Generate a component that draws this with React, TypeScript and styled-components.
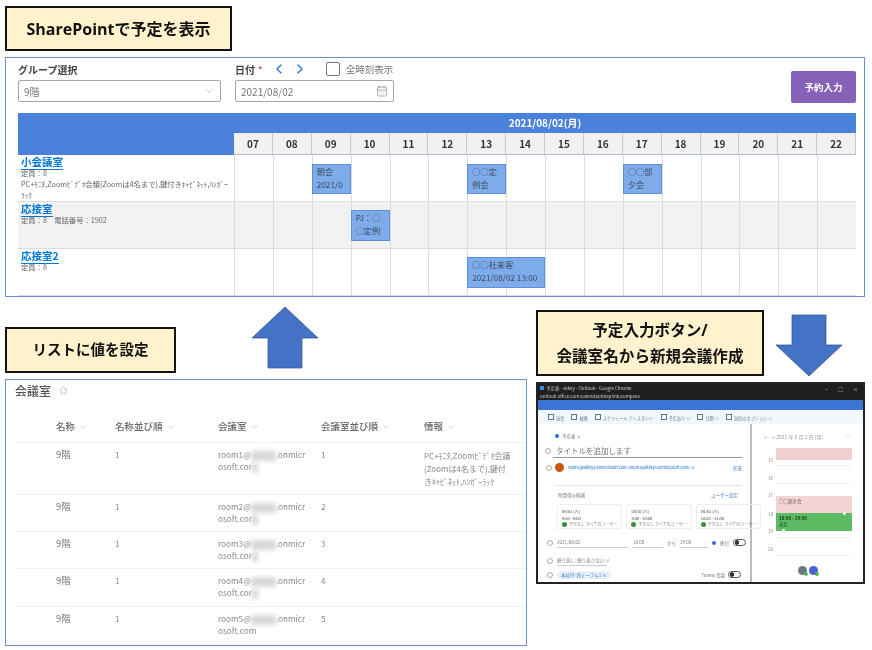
import styled, { createGlobalStyle } from 'styled-components'
import { CalendarDays, ChevronDown, ChevronLeft, ChevronRight, Star } from 'lucide-react'

const GlobalStyle = createGlobalStyle`
    html, body {
        margin: 0;
        padding: 0;
        background: #fff;
    }
    body {
        font-family: "Noto Sans CJK JP", "Noto Sans", sans-serif;
        color: #444;
    }
`

const FONT = `"Noto Sans CJK JP", "Noto Sans", sans-serif`
const LINE = '#dcdcdc'

const Page = styled.div`
    width: 872px;
    height: 650px;
    padding: 6px 0 0 5px;
    box-sizing: border-box;
    overflow: hidden;
    background: #fff;
`

const Callout = styled.div<{ $w: number; $h: number; $size: number }>`
    width: ${p => p.$w}px;
    height: ${p => p.$h}px;
    box-sizing: border-box;
    display: flex;
    flex-direction: column;
    align-items: center;
    justify-content: center;
    flex-shrink: 0;
    background: #fff2cc;
    border: 2px solid #111;
    color: #111;
    font-family: "Open Sans", ${FONT};
    font-size: ${p => p.$size}px;
    font-weight: 700;
    line-height: 26px;
    filter: blur(0.4px);
`

const LeftCallout = styled(Callout)`
    margin-bottom: 6px;
`

const SchedulePanel = styled.section`
    width: 860px;
    height: 240px;
    margin-top: 6px;
    box-sizing: border-box;
    padding: 2px 8px 0 12px;
    border: 1px solid #6d8fd6;
    overflow: hidden;
    filter: blur(0.45px);
`

const FilterBar = styled.div`
    display: flex;
    height: 53px;
`

const Field = styled.div<{ $w: number; $mr: number }>`
    width: ${p => p.$w}px;
    margin-right: ${p => p.$mr}px;
    flex-shrink: 0;
`

const FieldHead = styled.div`
    display: flex;
    align-items: center;
    height: 18px;
    font-size: 10px;
    font-weight: 700;
    color: #444;
    white-space: nowrap;
`

const Required = styled.span`
    color: #c4314b;
    margin-left: 3px;
    font-weight: 400;
`

const NavIcons = styled.span`
    display: flex;
    align-items: center;
    gap: 5px;
    margin-left: 8px;
    color: #2f7bdc;
`

const CheckBox = styled.span`
    width: 12px;
    height: 12px;
    margin-left: 18px;
    border: 1px solid #777;
    border-radius: 2px;
    flex-shrink: 0;
`

const CheckLabel = styled.span`
    margin-left: 6px;
    font-size: 9.5px;
    font-weight: 400;
    color: #777;
`

const InputBox = styled.div`
    height: 22px;
    margin-top: 2px;
    box-sizing: border-box;
    padding: 0 5px;
    display: flex;
    align-items: center;
    justify-content: space-between;
    border: 1px solid #a6a6a6;
    border-radius: 2px;
    font-size: 10px;
    color: #777;
`

const ReserveButton = styled.button`
    width: 65px;
    height: 32px;
    margin: 11px 0 0 auto;
    padding: 0;
    border: none;
    border-radius: 2px;
    background: #8661b8;
    color: #fff;
    font-family: ${FONT};
    font-size: 9.5px;
    font-weight: 700;
`

const Table = styled.div`
    width: 838px;
`

const TimeGrid = styled.div`
    display: grid;
    grid-template-columns: 216px repeat(16, 1fr);
`

const HeaderCorner = styled.div`
    grid-row: span 2;
    background: #4a82db;
`

const DateHead = styled.div`
    grid-column: span 16;
    height: 20px;
    line-height: 20px;
    text-align: center;
    background: #4a82db;
    color: #fff;
    font-size: 10px;
    font-weight: 700;
`

const HourHead = styled.div`
    height: 22px;
    line-height: 21px;
    box-sizing: border-box;
    text-align: center;
    background: #f1f1f1;
    border-right: 1px solid #c8c8c8;
    border-bottom: 1px solid #a9b9d6;
    color: #333;
    font-size: 10px;
    font-weight: 700;
`

const RoomRow = styled(TimeGrid)<{ $shaded?: boolean }>`
    height: 47px;
    box-sizing: border-box;
    border-bottom: 1px solid ${LINE};
    background: ${p => (p.$shaded ? '#f2f2f2' : '#fff')};
`

const RoomInfo = styled.div`
    padding: 1px 0 0 3px;
    overflow: hidden;
`

const RoomLink = styled.a`
    display: block;
    width: fit-content;
    height: 14px;
    box-sizing: border-box;
    line-height: 12px;
    border-bottom: 1px solid #0078d4;
    color: #0078d4;
    font-size: 10.5px;
    font-weight: 700;
`

const RoomNote = styled.div`
    font-size: 7.3px;
    line-height: 11px;
    color: #666;
    white-space: nowrap;
    &:nth-child(2) {
        margin-top: -2px;
    }
`

const Slot = styled.div`
    position: relative;
    border-left: 1px solid ${LINE};
`

const Booking = styled.div<{ $span?: number; $top: number; $h: number }>`
    position: absolute;
    z-index: 1;
    top: ${p => p.$top}px;
    left: -1px;
    width: ${p => (p.$span ?? 1) * 38.9}px;
    height: ${p => p.$h}px;
    box-sizing: border-box;
    padding: 0 4px;
    overflow: hidden;
    background: #7eabea;
    border: 1px solid #5f8fd8;
    color: #3c4a5e;
    font-size: 8.2px;
    line-height: 13px;
    white-space: nowrap;
`

const BottomRow = styled.div`
    display: flex;
`

const LeftColumn = styled.div`
    width: 522px;
    flex-shrink: 0;
`

const RightColumn = styled.div`
    margin: 13px 0 0 9px;
`

const LeftHead = styled.div`
    height: 82px;
    display: flex;
    align-items: flex-end;
`

const UpArrow = styled.svg`
    margin: 0 0 10px 75px;
`

const DownArrow = styled.svg`
    margin: 4px 0 0 11px;
`

const RightHead = styled.div`
    display: flex;
    height: 66px;
`

const ListPanel = styled.section`
    height: 267px;
    box-sizing: border-box;
    padding: 0 0 0 9px;
    border: 1px solid #6d8fd6;
    overflow: hidden;
    filter: blur(0.45px);
`

const ListTitle = styled.div`
    display: flex;
    align-items: center;
    gap: 8px;
    height: 20px;
    font-size: 12px;
    font-weight: 500;
    color: #555;
`

const ListRow = styled.div<{ $h: number; $head?: boolean }>`
    display: grid;
    grid-template-columns: 41px 59px 103px 103px 103px 1fr;
    height: ${p => p.$h}px;
    box-sizing: border-box;
    padding-top: ${p => (p.$head ? 20 : 6)}px;
    border-bottom: 1px solid #f0f0f0;
    font-size: 8.2px;
    line-height: 11.5px;
    color: #888;
`

const ListHeadCell = styled.div`
    display: flex;
    align-items: center;
    gap: 3px;
    height: 14px;
    font-size: 9.5px;
    font-weight: 500;
    color: #666;
    white-space: nowrap;
    svg {
        color: #999;
    }
`

const BodyCell = styled.div`
    min-width: 0;
    white-space: nowrap;
`

const FloorCell = styled.div`
    font-size: 9.5px;
    color: #777;
`

const InfoCell = styled.div`
    font-size: 8px;
    line-height: 13px;
    color: #888;
    white-space: nowrap;
`

const Smudge = styled.span<{ $w: number }>`
    display: inline-block;
    width: ${p => p.$w}px;
    height: 10px;
    vertical-align: middle;
    background: #d8d8d8;
    filter: blur(2px);
`

const OutlookWindow = styled.div`
    width: 329px;
    height: 202px;
    margin-top: 6px;
    box-sizing: border-box;
    border: 2px solid #222;
    overflow: hidden;
    filter: blur(0.7px);
    font-size: 5px;
    color: #777;
`

const ChromeBar = styled.div`
    height: 8px;
    padding: 0 5px 0 2px;
    display: flex;
    align-items: center;
    gap: 2px;
    background: #1f1f20;
    color: #c9c9c9;
    font-size: 4.5px;
    white-space: nowrap;
`

const WindowIcon = styled.span`
    width: 4px;
    height: 4px;
    background: #3a8ee6;
`

const WindowControls = styled.span`
    margin-left: auto;
    display: flex;
    gap: 10px;
    font-size: 5px;
`

const BrandBar = styled.div`
    height: 10px;
    background: #3a75d4;
`

const OutlookToolbar = styled.div`
    height: 14px;
    padding-left: 10px;
    display: flex;
    align-items: center;
    gap: 7px;
    background: #f2f7fc;
    color: #6a7f99;
    font-size: 4.2px;
    white-space: nowrap;
`

const ToolIcon = styled.span`
    display: inline-block;
    width: 4px;
    height: 4px;
    margin-right: 2px;
    border: 1px solid #5b7897;
`

const ComposeBody = styled.div`
    display: flex;
    height: 164px;
    background: #fff;
`

const ComposePane = styled.div`
    width: 214px;
    box-sizing: border-box;
    padding: 7px 9px 0 17px;
    border-right: 2px solid #bdbdbd;
    flex-shrink: 0;
`

const CalendarName = styled.div`
    display: flex;
    align-items: center;
    gap: 3px;
    height: 10px;
    font-size: 4.5px;
`

const BlueDot = styled.span`
    width: 4px;
    height: 4px;
    border-radius: 50%;
    background: #2f6fd8;
    flex-shrink: 0;
`

const GutterIcon = styled.span`
    width: 4px;
    height: 4px;
    margin-left: -11px;
    border: 1px solid #aaa;
    border-radius: 50%;
    flex-shrink: 0;
`

const TitleInput = styled.div`
    display: flex;
    align-items: center;
    gap: 5px;
    height: 13px;
    margin: 3px -1px 0 -2px;
    padding-left: 3px;
    border-bottom: 1px solid #9a9a9a;
    font-size: 7.5px;
    color: #777;
`

const Attendees = styled.div`
    display: flex;
    align-items: center;
    gap: 4px;
    height: 28px;
    box-sizing: border-box;
    padding: 0 0 8px 2px;
    margin-right: -1px;
    border-bottom: 1px solid #e4e4e4;
`

const Avatar = styled.span`
    width: 9px;
    height: 9px;
    border-radius: 50%;
    background: #c9570f;
    margin-left: -1px;
    flex-shrink: 0;
`

const AttendeeText = styled.span`
    color: #3b78c4;
    font-size: 3.8px;
    background: #eef5fc;
    white-space: nowrap;
`

const OptionalLink = styled.span`
    margin-left: auto;
    color: #3b78c4;
    font-size: 4.5px;
`

const SectionHead = styled.div`
    display: flex;
    justify-content: space-between;
    margin: 6px 0 5px;
    padding: 0 3px;
    font-size: 4.5px;
    line-height: 7px;
`

const SectionLink = styled.span`
    color: #3b78c4;
`

const CandidateRow = styled.div`
    display: grid;
    grid-template-columns: repeat(3, 1fr);
    gap: 4px;
    margin: 0 2px;
`

const CandidateCard = styled.div`
    height: 25px;
    box-sizing: border-box;
    padding: 3px 4px;
    border: 1px solid #eee;
    border-radius: 2px;
    font-size: 4px;
    line-height: 6.5px;
    color: #444;
    white-space: nowrap;
`

const CandidateStatus = styled.div`
    display: flex;
    align-items: center;
    gap: 2px;
    color: #888;
`

const GreenCheck = styled.span`
    width: 5px;
    height: 5px;
    border-radius: 50%;
    background: #3d8f3d;
`

const FormRow = styled.div<{ $mt: number }>`
    display: flex;
    align-items: center;
    gap: 4px;
    height: 11px;
    margin-top: ${p => p.$mt}px;
    padding-left: 3px;
    font-size: 4.5px;
    white-space: nowrap;
`

const Underlined = styled.span<{ $w: number }>`
    width: ${p => p.$w}px;
    height: 9px;
    line-height: 8px;
    border-bottom: 1px solid #ccc;
    flex-shrink: 0;
`

const Toggle = styled.span`
    width: 11px;
    height: 5px;
    border: 1px solid #555;
    border-radius: 4px;
    flex-shrink: 0;
    background: radial-gradient(circle at 3px 50%, #333 2px, transparent 2.5px);
`

const LocationChip = styled.span`
    padding: 1px 4px;
    border-radius: 5px;
    background: #e8f2fb;
    color: #3b78c4;
`

const TeamsSetting = styled.span`
    margin-left: auto;
    display: flex;
    align-items: center;
    gap: 3px;
`

const CalendarPane = styled.div`
    flex: 1;
    padding: 7px 11px 0 12px;
`

const CalendarNav = styled.div`
    display: flex;
    align-items: center;
    gap: 5px;
    height: 10px;
    font-size: 5px;
    color: #999;
    svg:last-child {
        margin-left: auto;
    }
`

const DayGrid = styled.div`
    position: relative;
    height: 111px;
    margin: 7px 0 0 12px;
    background: repeating-linear-gradient(to bottom, #fff 0 17px, #f1f1f1 17px 18px);
`

const HourLabel = styled.span<{ $y: number }>`
    position: absolute;
    left: -8px;
    top: ${p => p.$y}px;
    font-size: 4.5px;
    line-height: 7px;
    color: #888;
`

const CalendarEvent = styled.div<{ $y: number; $h: number; $bg: string }>`
    position: absolute;
    left: 0;
    right: 0;
    top: ${p => p.$y}px;
    height: ${p => p.$h}px;
    box-sizing: border-box;
    padding: 2px 3px;
    background: ${p => p.$bg};
    font-size: 4.5px;
    line-height: 6px;
    color: #555;
`

const BusyEvent = styled(CalendarEvent)`
    color: #14401a;
    &::before,
    &::after {
        content: '';
        position: absolute;
        width: 3px;
        height: 3px;
        border-radius: 50%;
        background: #fff;
    }
    &::before {
        top: -1px;
        right: 6px;
    }
    &::after {
        bottom: -1px;
        left: 6px;
    }
`

const Presence = styled.div`
    display: flex;
    justify-content: center;
    gap: 2px;
    margin-top: 7px;
`

const PresenceBubble = styled.span<{ $bg: string }>`
    position: relative;
    width: 9px;
    height: 9px;
    border-radius: 50%;
    background: ${p => p.$bg};
    &::after {
        content: '';
        position: absolute;
        right: -1px;
        bottom: -1px;
        width: 4px;
        height: 4px;
        border-radius: 50%;
        background: #55b855;
    }
`

const HOURS = ['07', '08', '09', '10', '11', '12', '13', '14', '15', '16', '17', '18', '19', '20', '21', '22']

interface BookingData {
    hour: string
    lines: string[]
    span?: number
    top: number
    h: number
}

const ROOMS: { name: string; notes: string[]; bookings: BookingData[] }[] = [
    {
        name: '小会議室',
        notes: ['定員：8', 'PC+ﾓﾆﾀ,Zoomﾋﾞﾃﾞｵ会議(Zoomは4名まで),鍵付きｷｬﾋﾞﾈｯﾄ,ﾊﾝｶﾞｰ', 'ﾗｯｸ'],
        bookings: [
            { hour: '09', lines: ['朝会', '2021/0', '8/02'], top: 9, h: 30 },
            { hour: '13', lines: ['○○定', '例会', '2021/0'], top: 9, h: 30 },
            { hour: '17', lines: ['○○部', '夕会', '2021/0'], top: 9, h: 30 },
        ],
    },
    {
        name: '応接室',
        notes: ['定員：8　電話番号：1902'],
        bookings: [{ hour: '10', lines: ['PJ：○', '○定例', '会'], top: 8, h: 31 }],
    },
    {
        name: '応接室2',
        notes: ['定員：8'],
        bookings: [{ hour: '13', lines: ['○○社来客', '2021/08/02 13:00', '- 2021/08/02 14:00'], span: 2, top: 8, h: 31 }],
    },
]

const LIST_ROWS = [
    { id: 1, h: 52 },
    { id: 2, h: 37 },
    { id: 3, h: 37 },
    { id: 4, h: 38 },
    { id: 5, h: 40 },
]

const CANDIDATES = ['8:00 - 9:00', '9:00 - 10:00', '10:00 - 11:00']

function ArrowShape({ points }: { points: string }) {
    return <polygon points={points} fill="#4472c4" stroke="#2f5597" strokeWidth="0.75" />
}

function Schedule() {
    return (
        <SchedulePanel>
            <FilterBar>
                <Field $w={203} $mr={14}>
                    <FieldHead>グループ選択</FieldHead>
                    <InputBox>
                        9階
                        <ChevronDown size={12} strokeWidth={1} color="#888" />
                    </InputBox>
                </Field>
                <Field $w={159} $mr={0}>
                    <FieldHead>
                        日付<Required>*</Required>
                        <NavIcons>
                            <ChevronLeft size={16} strokeWidth={2.2} />
                            <ChevronRight size={16} strokeWidth={2.2} />
                        </NavIcons>
                        <CheckBox />
                        <CheckLabel>全時刻表示</CheckLabel>
                    </FieldHead>
                    <InputBox>
                        2021/08/02
                        <CalendarDays size={12} strokeWidth={1} color="#666" />
                    </InputBox>
                </Field>
                <ReserveButton>予約入力</ReserveButton>
            </FilterBar>
            <Table>
                <TimeGrid>
                    <HeaderCorner />
                    <DateHead>2021/08/02(月)</DateHead>
                    {HOURS.map(hour => (
                        <HourHead key={hour}>{hour}</HourHead>
                    ))}
                </TimeGrid>
                {ROOMS.map((room, index) => (
                    <RoomRow key={room.name} $shaded={index === 1}>
                        <RoomInfo>
                            <RoomLink>{room.name}</RoomLink>
                            {room.notes.map(note => (
                                <RoomNote key={note}>{note}</RoomNote>
                            ))}
                        </RoomInfo>
                        {HOURS.map(hour => {
                            const booking = room.bookings.find(b => b.hour === hour)
                            return (
                                <Slot key={hour}>
                                    {booking && (
                                        <Booking $span={booking.span} $top={booking.top} $h={booking.h}>
                                            {booking.lines.map(line => (
                                                <div key={line}>{line}</div>
                                            ))}
                                        </Booking>
                                    )}
                                </Slot>
                            )
                        })}
                    </RoomRow>
                ))}
            </Table>
        </SchedulePanel>
    )
}

function RoomList() {
    return (
        <ListPanel>
            <ListTitle>
                会議室
                <Star size={9} strokeWidth={1} color="#777" />
            </ListTitle>
            <ListRow $h={43} $head>
                <div />
                {['名称', '名称並び順', '会議室', '会議室並び順', '情報'].map(title => (
                    <ListHeadCell key={title}>
                        {title}
                        <ChevronDown size={10} strokeWidth={1} />
                    </ListHeadCell>
                ))}
            </ListRow>
            {LIST_ROWS.map(row => (
                <ListRow key={row.id} $h={row.h}>
                    <div />
                    <FloorCell>9階</FloorCell>
                    <BodyCell>1</BodyCell>
                    <BodyCell>
                        room{row.id}@<Smudge $w={25} />.onmicr
                        <br />
                        {row.id === 5 ? 'osoft.com' : 'osoft.cor'}
                        {row.id !== 5 && <Smudge $w={6} />}
                    </BodyCell>
                    <BodyCell>{row.id}</BodyCell>
                    {row.id === 1 ? (
                        <InfoCell>
                            PC+ﾓﾆﾀ,Zoomﾋﾞﾃﾞｵ会議
                            <br />
                            (Zoomは4名まで),鍵付
                            <br />
                            きｷｬﾋﾞﾈｯﾄ,ﾊﾝｶﾞｰﾗｯｸ
                        </InfoCell>
                    ) : (
                        <div />
                    )}
                </ListRow>
            ))}
        </ListPanel>
    )
}

function Outlook() {
    return (
        <OutlookWindow>
            <ChromeBar>
                <WindowIcon />
                予定表 - skkey - Outlook - Google Chrome
                <WindowControls>
                    <span>−</span>
                    <span>□</span>
                    <span>×</span>
                </WindowControls>
            </ChromeBar>
            <ChromeBar>outlook.office.com/calendar/deeplink/compose</ChromeBar>
            <BrandBar />
            <OutlookToolbar>
                {['送信', '破棄', 'スケジュール アシスタント', '予定あり ∨', '分類 ∨', '返信のオプション ∨'].map(item => (
                    <span key={item}>
                        <ToolIcon />
                        {item}
                    </span>
                ))}
            </OutlookToolbar>
            <ComposeBody>
                <ComposePane>
                    <CalendarName>
                        <BlueDot />
                        予定表 ∨
                    </CalendarName>
                    <TitleInput>
                        <GutterIcon />
                        タイトルを追加します
                    </TitleInput>
                    <Attendees>
                        <GutterIcon />
                        <Avatar />
                        <AttendeeText>room1@skkey3.onmicrosoft.com &lt;room1@skkey3.onmicrosoft.com&gt; ×</AttendeeText>
                        <OptionalLink>任意</OptionalLink>
                    </Attendees>
                    <SectionHead>
                        時間帯の候補
                        <SectionLink>ユーザー設定</SectionLink>
                    </SectionHead>
                    <CandidateRow>
                        {CANDIDATES.map(time => (
                            <CandidateCard key={time}>
                                08/03 (火)
                                <br />
                                {time}
                                <CandidateStatus>
                                    <GreenCheck />
                                    予定なし すべてのユーザー
                                </CandidateStatus>
                            </CandidateCard>
                        ))}
                    </CandidateRow>
                    <FormRow $mt={8}>
                        <GutterIcon />
                        <Underlined $w={72}>2021/08/02</Underlined>
                        <Underlined $w={30}>18:00</Underlined>
                        から
                        <Underlined $w={28}>19:00</Underlined>
                        <BlueDot />
                        終日
                        <Toggle />
                    </FormRow>
                    <FormRow $mt={7}>
                        <GutterIcon />
                        <Underlined $w={50}>繰り返し: 繰り返さない ∨</Underlined>
                    </FormRow>
                    <FormRow $mt={3}>
                        <GutterIcon />
                        <LocationChip>本社9F-西テーブル1 ×</LocationChip>
                        <TeamsSetting>
                            Teams 会議
                            <Toggle />
                        </TeamsSetting>
                    </FormRow>
                </ComposePane>
                <CalendarPane>
                    <CalendarNav>
                        ← → 2021 年 8 月 2 日 (月)
                        <ChevronDown size={7} strokeWidth={1} />
                    </CalendarNav>
                    <DayGrid>
                        <HourLabel $y={8.5}>15</HourLabel>
                        <HourLabel $y={26.5}>16</HourLabel>
                        <HourLabel $y={43.5}>17</HourLabel>
                        <HourLabel $y={62.5}>18</HourLabel>
                        <HourLabel $y={79.5}>19</HourLabel>
                        <HourLabel $y={97.5}>20</HourLabel>
                        <CalendarEvent $y={0} $h={12} $bg="#f2cfcf" />
                        <CalendarEvent $y={48} $h={17} $bg="#f3d3d3">○○部夕会</CalendarEvent>
                        <BusyEvent $y={65} $h={18} $bg="#5dbb63">
                            <strong>18:00 - 19:00</strong>
                            <br />
                            未定
                        </BusyEvent>
                    </DayGrid>
                    <Presence>
                        <PresenceBubble $bg="#6b7880" />
                        <PresenceBubble $bg="#4a5fd8" />
                    </Presence>
                </CalendarPane>
            </ComposeBody>
        </OutlookWindow>
    )
}

export default function App() {
    return (
        <Page>
            <GlobalStyle />
            <Callout $w={227} $h={45} $size={16}>SharePointで予定を表示</Callout>
            <Schedule />
            <BottomRow>
                <LeftColumn>
                    <LeftHead>
                        <LeftCallout $w={171} $h={46} $size={14.5}>リストに値を設定</LeftCallout>
                        <UpArrow width="68" height="63" viewBox="0 0 68 63">
                            <ArrowShape points="34,1 67,32 51,32 51,62 17,62 17,32 1,32" />
                        </UpArrow>
                    </LeftHead>
                    <RoomList />
                </LeftColumn>
                <RightColumn>
                    <RightHead>
                        <Callout $w={228} $h={66} $size={15.6}>
                            <div>予定入力ボタン/</div>
                            <div>会議室名から新規会議作成</div>
                        </Callout>
                        <DownArrow width="68" height="63" viewBox="0 0 68 63">
                            <ArrowShape points="17,1 51,1 51,31 67,31 34,62 1,31 17,31" />
                        </DownArrow>
                    </RightHead>
                    <Outlook />
                </RightColumn>
            </BottomRow>
        </Page>
    )
}
